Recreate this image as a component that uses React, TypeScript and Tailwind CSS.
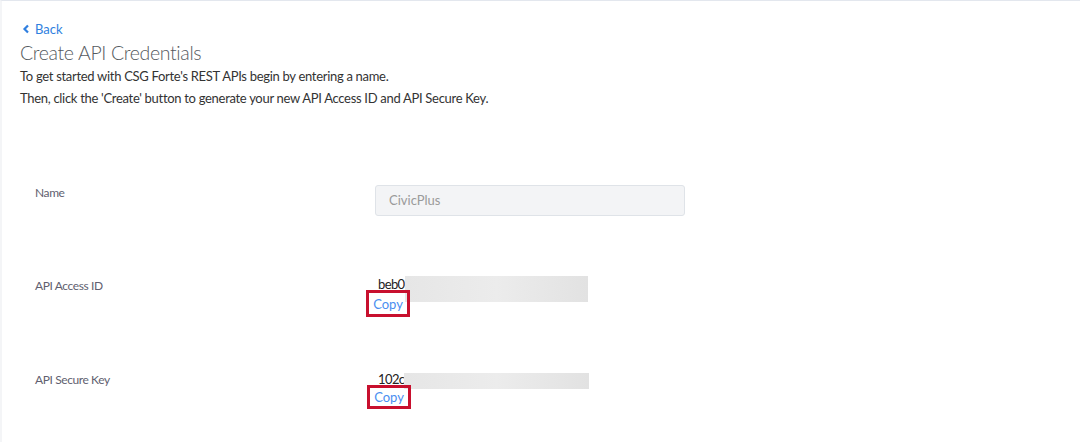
import React from "react";

function Redact({ w, h, top, left }: { w: number; h: number; top: number; left: number }) {
  return (
    <span
      className="absolute z-10 bg-gradient-to-r from-[#e6e6e6] via-[#ececec] to-[#e2e2e2]"
      style={{ width: w, height: h, top, left }}
    />
  );
}

export default function App() {
  return (
    <div className="w-[1080px] h-[442px] bg-white border-t border-[#e3e7ee] border-l-2 border-l-[#f4f5f7] font-['Lato',sans-serif] overflow-hidden">
      <div className="pl-[18px] pt-[19px]">
        <a className="flex items-center gap-[5px] text-[13px] text-[#2f7fe0] leading-[18px]">
          <svg width="8" height="10" viewBox="0 0 8 10" className="ml-[2px]">
            <path d="M6 1.5 L2.5 5 L6 8.5" stroke="#2f7fe0" strokeWidth="2.2" fill="none" />
          </svg>
          Back
        </a>
        <h1 className="mt-[2px] text-[19.5px] font-light tracking-[-0.35px] text-[#555a60] leading-[26px]">Create API Credentials</h1>
        <p className="-mt-[1px] text-[13px] tracking-[-0.3px] text-[#333] leading-[22px]">
          To get started with CSG Forte's REST APIs begin by entering a name.
          <br />
          Then, click the 'Create' button to generate your new API Access ID and API Secure Key.
        </p>
      </div>

      <div className="mt-[76px] flex pl-[33px]">
        <div className="w-[340px] pt-0 leading-[16px] text-[12px] tracking-[-0.4px] text-[#5f5f70]">Name</div>
        <div className="w-[310px] h-[31px] rounded-[3px] border border-[#dfe3e8] bg-[#f3f4f6] flex items-center pl-[13px] text-[13px] text-[#9a9a9a]">
          CivicPlus
        </div>
      </div>

      <div className="mt-[60px] flex pl-[33px]">
        <div className="w-[340px] pt-[1px] text-[12px] tracking-[-0.4px] text-[#5f5f70]">API Access ID</div>
        <div className="relative pl-[3px] text-[13px] leading-[18px]">
          <div className="text-[#222] tracking-[-0.6px] -mt-[1px] h-[20px]">beb0</div>
          <Redact w={183} h={26} top={0} left={30} />
          <div className="relative z-20 -mt-[5px] -ml-[12px] w-[44px] h-[27px] border-[3px] border-[#c8102e] flex items-center justify-center text-[13px] text-[#4a8ef0]">
            Copy
          </div>
        </div>
      </div>

      <div className="mt-[53px] flex pl-[33px]">
        <div className="w-[340px] pt-[1px] text-[12px] tracking-[-0.4px] text-[#5f5f70]">API Secure Key</div>
        <div className="relative pl-[3px] pt-[1px] text-[13px] leading-[18px]">
          <div className="text-[#222] tracking-[-0.6px] -mt-[1px] h-[20px]">102c</div>
          <Redact w={185} h={16} top={3} left={29} />
          <div className="relative z-20 -mt-[5px] -ml-[11px] w-[44px] h-[24px] border-[3px] border-[#c8102e] flex items-center justify-center text-[13px] text-[#4a8ef0]">
            Copy
          </div>
        </div>
      </div>
    </div>
  );
}
